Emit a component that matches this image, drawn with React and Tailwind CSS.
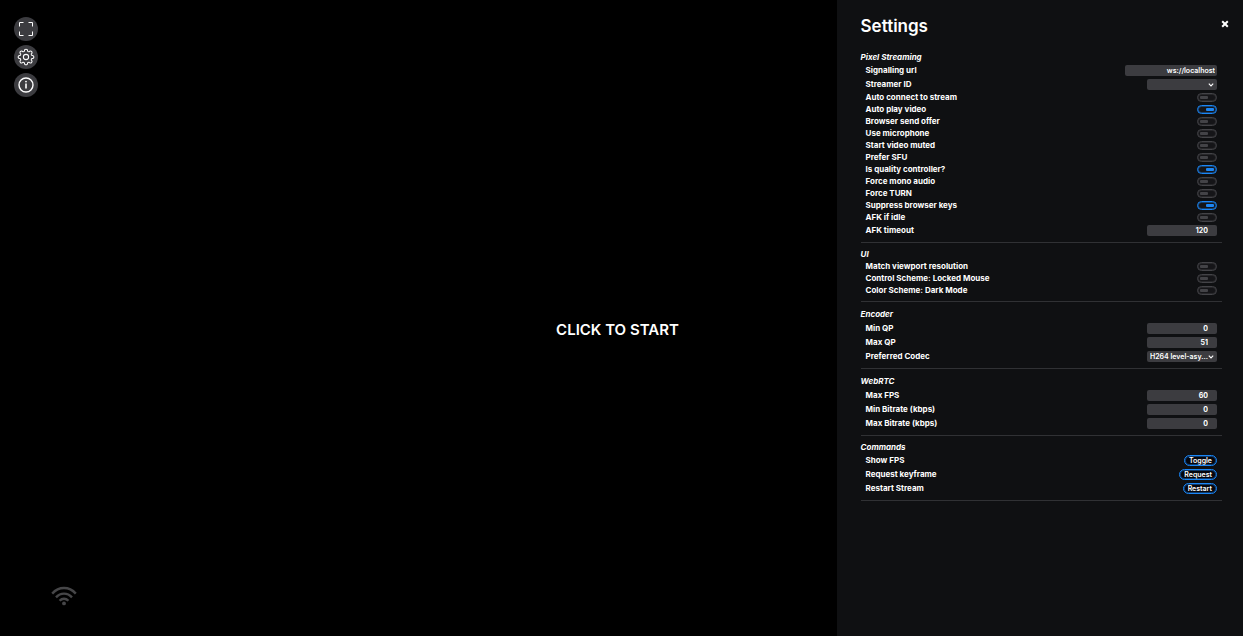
import React from 'react';

const sections = [
  {
    title: 'Pixel Streaming',
    pad: 'pb-[5px]',
    head: 'leading-3',
    rows: [
      { label: 'Signalling url', type: 'text', value: 'ws://localhost' },
      { label: 'Streamer ID', type: 'select', value: '' },
      { label: 'Auto connect to stream', type: 'toggle' },
      { label: 'Auto play video', type: 'toggle', on: true },
      { label: 'Browser send offer', type: 'toggle' },
      { label: 'Use microphone', type: 'toggle' },
      { label: 'Start video muted', type: 'toggle' },
      { label: 'Prefer SFU', type: 'toggle' },
      { label: 'Is quality controller?', type: 'toggle', on: true },
      { label: 'Force mono audio', type: 'toggle' },
      { label: 'Force TURN', type: 'toggle' },
      { label: 'Suppress browser keys', type: 'toggle', on: true },
      { label: 'AFK if idle', type: 'toggle' },
      { label: 'AFK timeout', type: 'number', value: 120 },
    ],
  },
  {
    title: 'UI',
    pad: 'pb-[5px]',
    head: 'leading-3',
    rows: [
      { label: 'Match viewport resolution', type: 'toggle' },
      { label: 'Control Scheme: Locked Mouse', type: 'toggle' },
      { label: 'Color Scheme: Dark Mode', type: 'toggle' },
    ],
  },
  {
    title: 'Encoder',
    pad: 'pb-[5px]',
    head: 'leading-[14px]',
    rows: [
      { label: 'Min QP', type: 'number', value: 0 },
      { label: 'Max QP', type: 'number', value: 51 },
      { label: 'Preferred Codec', type: 'select', value: 'H264 level-asy...' },
    ],
  },
  {
    title: 'WebRTC',
    pad: 'pb-[5px]',
    head: 'leading-[14px]',
    rows: [
      { label: 'Max FPS', type: 'number', value: 60 },
      { label: 'Min Bitrate (kbps)', type: 'number', value: 0 },
      { label: 'Max Bitrate (kbps)', type: 'number', value: 0 },
    ],
  },
  {
    title: 'Commands',
    pad: 'pb-[5px]',
    head: 'leading-3',
    rows: [
      { label: 'Show FPS', type: 'button', value: 'Toggle' },
      { label: 'Request keyframe', type: 'button', value: 'Request' },
      { label: 'Restart Stream', type: 'button', value: 'Restart' },
    ],
  },
];

function Control({ row, id }) {
  if (row.type === 'toggle') {
    return (
      <input
        id={id}
        type="checkbox"
        defaultChecked={row.on}
        className="flex h-[9px] w-5 appearance-none items-center rounded-full border border-[#434347] bg-[#151518] px-0.5 shadow-[inset_0_0_0_1px_#43434766] before:h-[3px] before:w-2 before:rounded-[1px] before:bg-[#434347] checked:justify-end checked:border-[#1b86f5] checked:shadow-[inset_0_0_0_1px_#1b86f566] checked:before:bg-[#1b86f5]"
      />
    );
  }
  if (row.type === 'select') {
    return (
      <span className="relative block h-[11px] w-[70px]">
        <select
          id={id}
          defaultValue={row.value}
          className="block h-[11px] w-full appearance-none rounded-xs bg-[#3c3c40] pr-2 pl-[3px] text-[7px] leading-[11px] font-semibold text-white"
        >
          <option value={row.value}>{row.value}</option>
        </select>
        <svg
          viewBox="0 0 6 4"
          className="pointer-events-none absolute top-1 right-[3px] h-1 w-1.5"
          fill="none"
          stroke="#fff"
          strokeWidth="1.1"
          aria-hidden="true"
        >
          <path d="M0.8 0.6 3 2.9 5.2 0.6" />
        </svg>
      </span>
    );
  }
  if (row.type === 'button') {
    return (
      <button
        id={id}
        type="button"
        className="h-[11px] rounded-full border border-[#1b86f5] bg-[#05060c] px-1 text-[7px] leading-[9px] font-semibold text-white shadow-[inset_0_0_0_1px_#1b86f566]"
      >
        {row.value}
      </button>
    );
  }
  if (row.type === 'number') {
    return (
      <input
        id={id}
        type="number"
        defaultValue={row.value}
        className="block h-[11px] w-[70px] [appearance:textfield] rounded-xs bg-[#3c3c40] pr-[9px] text-right text-[7px] leading-[11px] font-bold text-white [&::-webkit-inner-spin-button]:appearance-none"
      />
    );
  }
  return (
    <input
      id={id}
      type="text"
      defaultValue={row.value}
      className="block h-[11px] w-[92px] rounded-xs bg-[#3c3c40] pr-0.5 text-right text-[7px] leading-[11px] font-semibold text-white"
    />
  );
}

function Row({ row }) {
  const id = row.label.toLowerCase().replace(/[^a-z]+/g, '-');
  return (
    <div
      className={
        row.type === 'toggle'
          ? 'flex h-3 items-center justify-between px-[5px]'
          : 'flex h-3.5 items-center justify-between px-[5px]'
      }
    >
      <label htmlFor={id} className="text-[8px] leading-3 font-bold">
        {row.label}
      </label>
      <Control row={row} id={id} />
    </div>
  );
}

function RoundButton({ label, children }) {
  return (
    <button
      type="button"
      aria-label={label}
      className="flex size-6 items-center justify-center rounded-full bg-[#3c3c40] text-white"
    >
      {children}
    </button>
  );
}

function gearPath() {
  const point = (r, deg) => {
    const a = (deg * Math.PI) / 180;
    return `${(12 + r * Math.cos(a)).toFixed(2)} ${(12 + r * Math.sin(a)).toFixed(2)}`;
  };
  let d = `M${point(8.2, -14)}`;
  for (let i = 0; i < 8; i += 1) {
    const c = i * 45;
    d += `C${point(11.6, c - 14)} ${point(11.6, c + 14)} ${point(8.2, c + 14)}`;
    d += `Q${point(7.4, c + 22.5)} ${point(8.2, c + 31)}`;
  }
  return `${d}Z`;
}

export default function App() {
  return (
    <div className="relative flex min-h-screen justify-between bg-black font-['Inter',sans-serif] text-white">
      <button
        type="button"
        className="absolute inset-0 flex items-center justify-center pt-6 pr-2 text-[15px] leading-5 font-semibold"
      >
        CLICK TO START
      </button>

      <div className="relative flex flex-col justify-between pt-[17px] pb-[30px] pl-3.5">
        <div className="flex flex-col gap-1">
          <RoundButton label="Fullscreen">
            <svg viewBox="0 0 14 14" className="size-3.5" fill="none" stroke="currentColor" strokeWidth="1" aria-hidden="true">
              <path d="M0.5 4.5v-4h4M9.5 0.5h4v4M13.5 9.5v4h-4M4.5 13.5h-4v-4" />
            </svg>
          </RoundButton>
          <RoundButton label="Settings">
            <svg viewBox="0 0 24 24" className="size-[18px]" fill="none" stroke="currentColor" strokeWidth="1.4" strokeLinejoin="round" aria-hidden="true">
              <path d={gearPath()} />
              <circle cx="12" cy="12" r="3.5" />
            </svg>
          </RoundButton>
          <RoundButton label="Information">
            <svg viewBox="0 0 16 16" className="size-4" fill="none" stroke="currentColor" aria-hidden="true">
              <circle cx="8" cy="8" r="7" strokeWidth="1.4" />
              <path d="M8 6.6v5" strokeWidth="1.6" />
              <circle cx="8" cy="4.6" r="0.9" fill="currentColor" stroke="none" />
            </svg>
          </RoundButton>
        </div>
        <svg viewBox="0 0 26 20" className="ml-[37px] h-5 w-[26px]" fill="none" stroke="#464648" strokeWidth="2.4" role="img" aria-label="Connection strength">
          <path d="M1.2 7.6C7.8 0.2 18.2 0.2 24.8 7.6" />
          <path d="M5 11.4C9.6 6.4 16.4 6.4 21 11.4" />
          <path d="M8.6 14.8C11.2 12 14.8 12 17.4 14.8" />
          <circle cx="13" cy="17.4" r="1.9" fill="#464648" stroke="none" />
        </svg>
      </div>

      <aside className="relative w-[32.7%] min-w-80 bg-[#0f1012] pt-4 pr-[21px] pb-6 pl-6">
        <header className="flex items-start justify-between">
          <h1 className="text-[17px] leading-5 font-semibold">Settings</h1>
          <button type="button" aria-label="Close settings" className="-mr-[11px] p-1">
            <svg viewBox="0 0 8 8" className="size-2" fill="none" stroke="currentColor" strokeWidth="2" aria-hidden="true">
              <path d="M1.2 1.2 6.8 6.8M6.8 1.2 1.2 6.8" />
            </svg>
          </button>
        </header>
        <div className="pt-2.5">
          {sections.map((section) => (
            <section key={section.title} className={`border-b border-[#303134] pt-[5px] ${section.pad}`}>
              <h2 className={`text-[8px] font-bold italic ${section.head}`}>{section.title}</h2>
              {section.rows.map((row) => (
                <Row key={row.label} row={row} />
              ))}
            </section>
          ))}
        </div>
      </aside>
    </div>
  );
}
